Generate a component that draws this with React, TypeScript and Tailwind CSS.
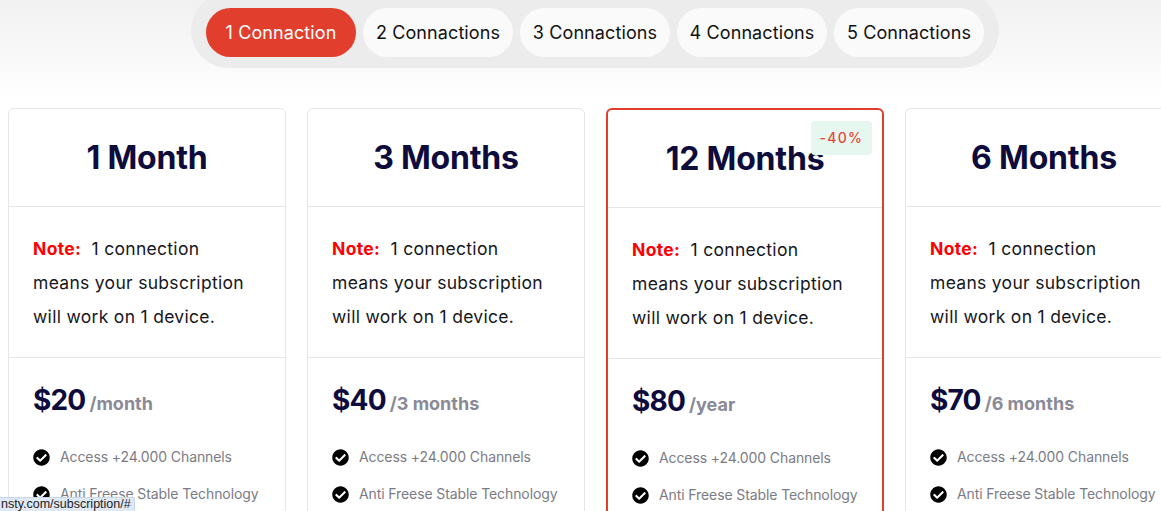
import React from 'react';
import { FaCheckCircle } from 'react-icons/fa';

const TABS = ['1 Connaction', '2 Connactions', '3 Connactions', '4 Connactions', '5 Connactions'];

const PLANS = [
  { id: 1, title: '1 Month', price: '$20', period: '/month', featured: false },
  { id: 2, title: '3 Months', price: '$40', period: '/3 months', featured: false },
  { id: 3, title: '12 Months', price: '$80', period: '/year', featured: true, badge: '-40%' },
  { id: 4, title: '6 Months', price: '$70', period: '/6 months', featured: false },
];

const FEATURES = ['Access +24.000 Channels', 'Anti Freese Stable Technology'];

const App: React.FC = () => {
  return (
    <div className="relative w-[1161px] h-[511px] overflow-hidden bg-white font-['Inter',sans-serif]">
      <div className="h-[100px] bg-gradient-to-b from-[#f1f1f1] to-white">
        <div className="flex justify-center pl-[29px]">
          <div className="-mt-[7px] flex gap-[7px] rounded-[38px] bg-[#ececec] px-[15px] pt-[15px] pb-[11px]">
            {TABS.map((tab, i) => (
              <button
                key={tab}
                className={`h-[49px] w-[150px] rounded-full text-[18px] tracking-[0.1px] ${
                  i === 0 ? 'bg-[#e23e2d] text-white' : 'bg-[#fafafa] text-[#111]'
                }`}
              >
                {tab}
              </button>
            ))}
          </div>
        </div>
      </div>

      <div className="mt-[8px] flex gap-[21px] pl-[8px]">
        {PLANS.map((plan) => (
          <div
            key={plan.id}
            className={`relative w-[278px] shrink-0 rounded-[6px] bg-white ${
              plan.featured ? 'border-2 border-[#e23e2d]' : 'border border-[#e6e6e6]'
            }`}
          >
            {plan.badge && (
              <span className="absolute right-[10px] top-[11px] rounded-[4px] bg-[#e5f7ee] px-[9px] py-[7px] text-[14px] font-medium tracking-[1.2px] text-[#e8483a] leading-[20px]">
                {plan.badge}
              </span>
            )}
            <div className="flex h-[98px] items-center justify-center border-b border-[#e6e6e6]">
              <h2 className="text-[32px] font-bold tracking-[-0.2px] text-[#0e0b3d]">{plan.title}</h2>
            </div>
            <div className="h-[151px] border-b border-[#e6e6e6] px-[24px] pt-[25px] text-[17.5px] leading-[34px] tracking-[0.3px] text-[#16161d]">
              <span className="block whitespace-nowrap">
                <span className="font-bold text-[#ff0000]">Note:</span>&nbsp; 1 connection
              </span>
              <span className="block whitespace-nowrap">means your subscription</span>
              <span className="block whitespace-nowrap">will work on 1 device.</span>
            </div>
            <div className="px-[24px] pt-[21px] pb-[20px]">
              <div className="flex items-baseline gap-[4px]">
                <span className="text-[28px] font-bold tracking-[-0.8px] text-[#0e0b3d]">{plan.price}</span>
                <span className="text-[18px] font-bold text-[#8a8a96]">{plan.period}</span>
              </div>
              <ul className="mt-[27px] space-y-[19px]">
                {FEATURES.map((f) => (
                  <li
                    key={f}
                    className="flex items-center gap-[10px] whitespace-nowrap text-[14px] leading-[18px] tracking-[-0.1px] text-[#7b7b85]"
                  >
                    <FaCheckCircle className="h-[17px] w-[17px] shrink-0 text-black" />
                    {f}
                  </li>
                ))}
              </ul>
            </div>
          </div>
        ))}
      </div>

      <div className="absolute bottom-0 left-0 h-[14px] w-[135px] overflow-hidden whitespace-nowrap rounded-tr-[2px] border-t border-r border-[#c9d6e8] bg-[#dfe8f5] pl-[1px] text-[12.5px] leading-[13px] text-[#222] font-['Liberation_Sans',sans-serif]">
        nsty.com/subscription/#
      </div>
    </div>
  );
};

export default App;
